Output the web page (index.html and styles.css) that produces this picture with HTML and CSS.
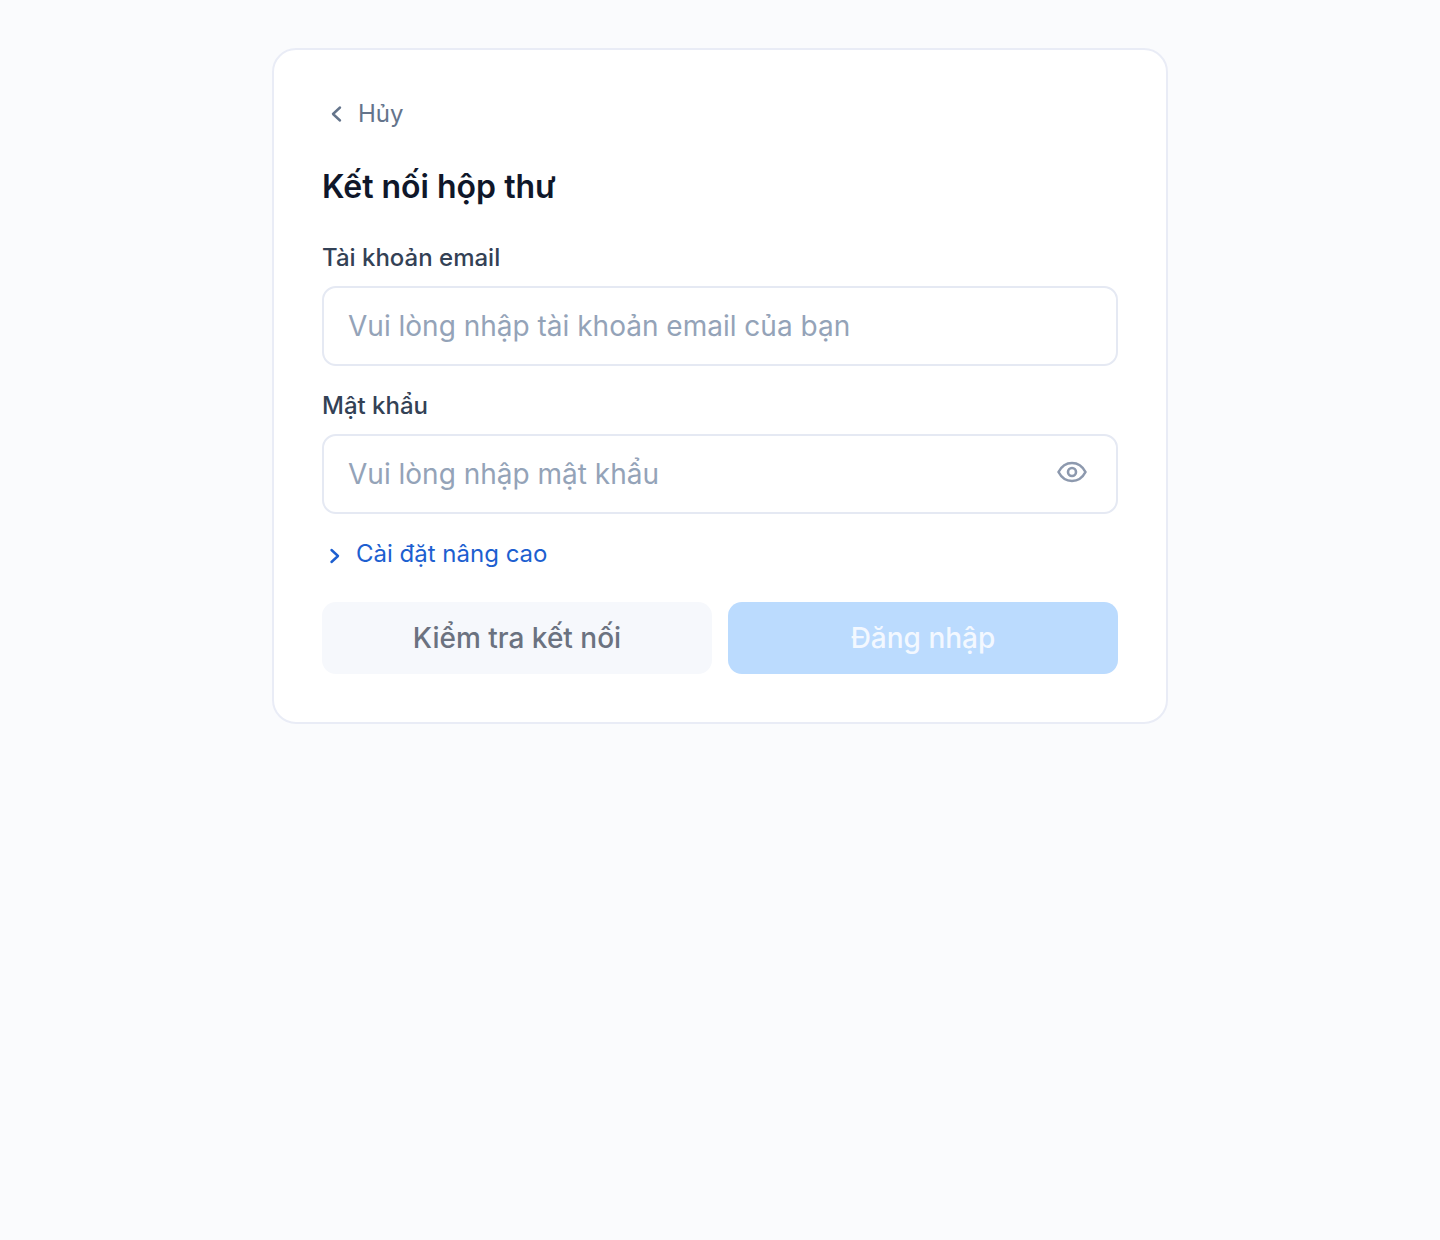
FILE: index.html
```html
<!DOCTYPE html>
<html lang="vi">
<head>
  <meta charset="UTF-8">
  <title>Kết nối hộp thư</title>
  <link rel="stylesheet" href="styles.css">
</head>
<body>
  <div class="card">
    <a class="back-link">
      <svg class="chevron" width="28" height="28" viewBox="0 0 28 28" fill="none" stroke="currentColor" stroke-width="2.4" stroke-linecap="round" stroke-linejoin="round"><path d="M18 7.500 11 14l7 6.500"/></svg>
      <span>Hủy</span>
    </a>
    <h1>Kết nối hộp thư</h1>
    <label class="field-label" for="emailInput">Tài khoản email</label>
    <div class="input-box">
      <input type="text" id="emailInput" placeholder="Vui lòng nhập tài khoản email của bạn">
    </div>
    <label class="field-label" for="passwordInput">Mật khẩu</label>
    <div class="input-box">
      <input type="password" id="passwordInput" placeholder="Vui lòng nhập mật khẩu">
      <svg class="eye" width="32" height="32" viewBox="0 0 32 32" fill="none" stroke="currentColor" stroke-width="2.6" stroke-linecap="round" stroke-linejoin="round"><path d="M2.500 16C5.500 10.300 10.200 7 16 7s10.500 3.300 13.500 9c-3 5.700-7.700 9-13.500 9S5.500 21.700 2.500 16Z"/><circle cx="16" cy="16" r="4"/></svg>
    </div>
    <a class="advanced-link">
      <svg class="chevron" width="24" height="24" viewBox="0 0 24 24" fill="none" stroke="currentColor" stroke-width="2.4" stroke-linecap="round" stroke-linejoin="round"><path d="m9.500 8 6.500 6-6.500 6"/></svg>
      <span>Cài đặt nâng cao</span>
    </a>
    <div class="actions">
      <button class="btn-test">Kiểm tra kết nối</button>
      <button class="btn-login">Đăng nhập</button>
    </div>
  </div>
</body>
</html>
```

FILE: styles.css
```css
* {
  box-sizing: border-box;
}
body {
  margin: 0;
  min-height: 1240px;
  padding-top: 48px;
  background: #fafbfd;
  font-family: Inter, "Noto Sans", sans-serif;
}
.card {
  width: 896px;
  margin: 0 auto;
  padding: 48px;
  background: #fff;
  border: 2px solid #e9ecf6;
  border-radius: 24px;
}
.back-link {
  display: flex;
  align-items: center;
  gap: 8px;
  height: 32px;
  font-size: 24px;
  color: #64748b;
}
.back-link span {
  margin-bottom: 2px;
}
h1 {
  margin: 35px 0 32px;
  font-size: 32px;
  line-height: 44px;
  font-weight: 600;
  color: #0f172a;
}
.field-label {
  display: block;
  height: 34px;
  margin-bottom: 11px;
  font-size: 24px;
  line-height: 34px;
  font-weight: 500;
  color: #334155;
}
.input-box {
  display: flex;
  align-items: center;
  height: 80px;
  margin-bottom: 23px;
  padding: 0 28px 0 24px;
  border: 2px solid #e5e9f3;
  border-radius: 14px;
}
.input-box input {
  flex: 1;
  min-width: 0;
  padding: 0;
  border: 0;
  outline: 0;
  font: 28px Inter, "Noto Sans", sans-serif;
  color: #0f172a;
}
.input-box input::placeholder {
  color: #94a3b8;
  opacity: 1;
}
.eye {
  color: #8d99ae;
  margin-top: -4px;
}
.advanced-link {
  display: flex;
  align-items: center;
  gap: 10px;
  height: 34px;
  font-size: 24px;
  color: #1d5fd0;
}
.advanced-link span {
  margin-bottom: 2px;
}
.actions {
  display: flex;
  gap: 16px;
  margin-top: 31px;
}
.actions button {
  flex: 1;
  height: 72px;
  border: 0;
  border-radius: 14px;
  font: 500 28px Inter, "Noto Sans", sans-serif;
}
.btn-test {
  background: #f6f8fc;
  color: #6b7280;
}
.btn-login {
  background: #bbdbfe;
  color: #f3f8ff;
}
```
